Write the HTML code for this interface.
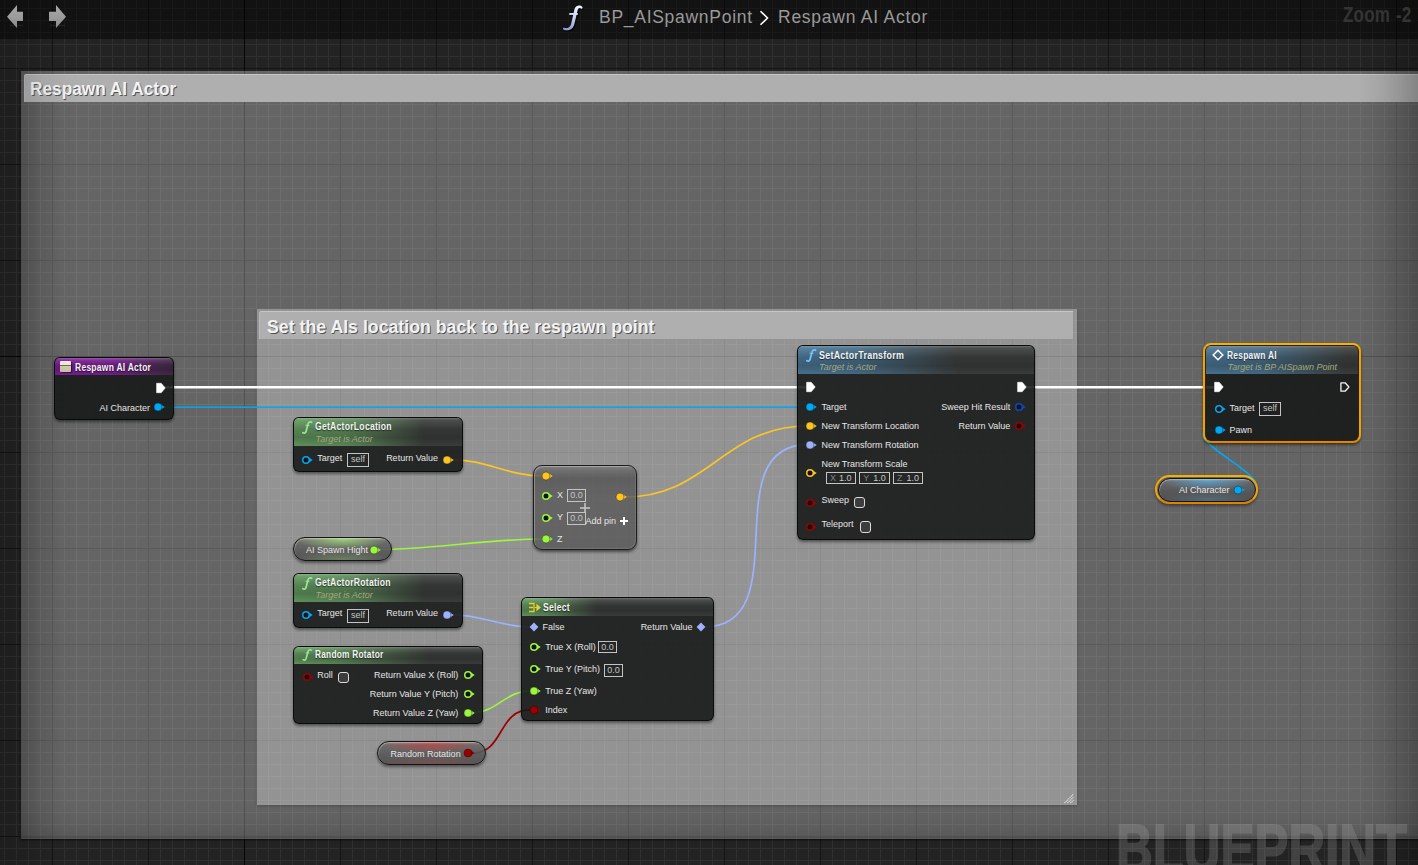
<!DOCTYPE html>
<html><head><meta charset="utf-8">
<style>
*{margin:0;padding:0;box-sizing:border-box}
html,body{width:1418px;height:865px;overflow:hidden;background:#222}
body{position:relative;font-family:"Liberation Sans",sans-serif}
.abs{position:absolute}
#grid{position:absolute;left:0;top:0;width:1418px;height:865px;background-color:#232323;
background-image:
 linear-gradient(to right,#060606 1px,transparent 1px),
 linear-gradient(to bottom,#060606 1px,transparent 1px),
 linear-gradient(to right,#141414 1px,transparent 1px),
 linear-gradient(to bottom,#141414 1px,transparent 1px),
 linear-gradient(to right,#303030 1px,transparent 1px),
 linear-gradient(to bottom,#303030 1px,transparent 1px);
background-size:1418px 865px,1418px 865px,96px 96px,96px 96px,12px 12px,12px 12px;
background-position:244px 0,0 356px,52px 0,0 68px,4px 0,0 8px;
background-repeat:no-repeat,no-repeat,repeat,repeat,repeat,repeat;}
.cmt{position:absolute;background:rgba(255,255,255,0.30)}
.cmt .bar{position:absolute;background:#afafaf;border-top:1px solid #c6c6c6;border-left:1px solid #b9b9b9;border-radius:2px 0 0 0}
.cmt .ttl{position:absolute;font-weight:bold;color:#f2f2f2;text-shadow:1px 1px 0 rgba(0,0,0,0.55);white-space:nowrap;line-height:1}
#wires{position:absolute;left:0;top:0}
.node{position:absolute;background:rgba(22,24,23,0.88);border-radius:6px;border:1px solid rgba(8,8,8,0.9);box-shadow:0 2px 3px rgba(0,0,0,0.45);overflow:hidden}
.hdr{position:absolute;left:0;top:0;right:0}
.pill{position:absolute;border-radius:13px;border:1px solid #141414;box-shadow:0 2px 3px rgba(0,0,0,0.45)}
.t{position:absolute;white-space:nowrap;color:#e6e6e6;line-height:1}
.tt{position:absolute;white-space:nowrap;font-weight:bold;color:#f4f4f4;line-height:1;transform-origin:0 0;text-shadow:0 1px 1px rgba(0,0,0,0.55)}
.sub{position:absolute;white-space:nowrap;font-style:italic;color:#a2a97e;line-height:1}
.box{position:absolute;border:1px solid #c4c4c4;color:#c4c4c4;text-align:center;white-space:nowrap}
#vigl{position:absolute;left:0;top:0;width:80px;height:865px;background:linear-gradient(to right,rgba(0,0,0,0.14),rgba(0,0,0,0.12) 21px,rgba(0,0,0,0.06) 40px,rgba(0,0,0,0.02) 60px,rgba(0,0,0,0) 80px)}
#vigr{position:absolute;left:1338px;top:0;width:80px;height:865px;background:linear-gradient(to left,rgba(0,0,0,0.25),rgba(0,0,0,0.15) 18px,rgba(0,0,0,0.06) 38px,rgba(0,0,0,0.0) 60px)}
#bar{position:absolute;left:0;top:0;width:1418px;height:39px;background:rgba(0,0,0,0.48)}
</style></head><body>
<div id="grid"></div>
<!-- outer comment -->
<div class="cmt" style="left:21px;top:71px;width:1420px;height:768px;box-shadow:0 1px 2px rgba(0,0,0,0.7),inset 0 -1px 0 rgba(255,255,255,0.05),inset 0 -2px 0 rgba(0,0,0,0.08)">
  <div class="abs" style="left:0;top:0;width:100%;height:100%;background:linear-gradient(to top,rgba(0,0,0,0.13),rgba(0,0,0,0.06) 15px,rgba(0,0,0,0) 40px),linear-gradient(to right,rgba(0,0,0,0.12),rgba(0,0,0,0.05) 18px,rgba(0,0,0,0) 40px)"></div>
  <div class="bar" style="left:3px;top:3px;width:1417px;height:28px"></div>
  <div class="ttl" style="left:9.3px;top:9.3px;font-size:18px;transform:scaleX(0.958);transform-origin:0 0">Respawn AI Actor</div>
</div>
<!-- inner comment -->
<div class="cmt" style="left:257px;top:309px;width:820px;height:496px;box-shadow:0 1px 3px rgba(0,0,0,0.22),inset 0 -2px 0 rgba(255,255,255,0.04),inset -2px 0 0 rgba(255,255,255,0.03)">
  <svg class="abs" style="left:806px;top:483px" width="12" height="12"><path d="M1.5 11 L10.5 2 M4.5 11 L10.5 5 M7.5 11 L10.5 8" stroke="rgba(235,235,235,0.8)" stroke-width="1.2" stroke-dasharray="1.2 0.6"/></svg>
  <div class="bar" style="left:2px;top:2px;width:814px;height:28px"></div>
  <div class="ttl" style="left:10.2px;top:8.8px;font-size:18px;transform:scaleX(0.985);transform-origin:0 0">Set the AIs location back to the respawn point</div>
</div>

<svg id="wires" width="1418" height="865"><path d="M160 387.3 L810 387.3" stroke="#fff" stroke-width="2.4" fill="none"/><path d="M1020 387.3 L1218 387.3" stroke="#fff" stroke-width="2.4" fill="none"/><path d="M160 407.2 L810 407.2" stroke="#00a8f3" stroke-width="1.6" fill="none"/><path d="M451.0 459.6 C487.1 459.6 506.9 476.0 543.0 476.0" stroke="#fcc424" stroke-width="1.7" fill="none"/><path d="M624.0 497.0 C709.0 497.0 723.0 426.0 808.0 426.0" stroke="#fcc424" stroke-width="1.7" fill="none"/><path d="M377.0 549.5 C435.8 549.5 484.2 539.0 543.0 539.0" stroke="#9cf63f" stroke-width="1.7" fill="none"/><path d="M451.0 614.6 C481.8 614.6 500.2 627.0 531.0 627.0" stroke="#9db2ff" stroke-width="1.7" fill="none"/><path d="M704.0 627.0 C799.4 627.0 712.6 444.7 808.0 444.7" stroke="#9db2ff" stroke-width="1.7" fill="none"/><path d="M471.0 712.8 C498.3 712.8 503.7 691.0 531.0 691.0" stroke="#9cf63f" stroke-width="1.7" fill="none"/><path d="M471.0 753.4 C505.6 753.4 496.4 709.7 531.0 709.7" stroke="#9a0000" stroke-width="1.7" fill="none"/><path d="M1238 489.5 C1306 489.5 1153 429.7 1221 429.7" stroke="#00a8f3" stroke-width="1.7" fill="none"/></svg>
<div class="node" style="left:54px;top:357px;width:120px;height:63px;">
<div class="hdr" style="height:17px;background:linear-gradient(to bottom, rgba(255,255,255,0.25) 0px, rgba(255,255,255,0.08) 2px, rgba(0,0,0,0.14) 40%, rgba(0,0,0,0.22) 70%, rgba(0,0,0,0.06) 100%),linear-gradient(to right, rgba(132,30,160,0.95) 0px, rgba(132,30,160,0.8) 60px, rgba(132,30,160,0) 125px),#3a2f3c"></div>
</div>
<div class="abs" style="left:60px;top:361px;width:11px;height:11px;background:linear-gradient(#f0eee6 0,#ece9de 38%,#7a6a4a 38%,#7a6a4a 48%,#d2ccb2 48%,#c8c0a4 100%);border-radius:1px;box-shadow:1px 1px 1px rgba(0,0,0,0.5)"></div>
<div class="tt" style="left:75.0px;top:362.51px;font-size:10px;letter-spacing:0.3px;transform:scaleX(0.85)">Respawn AI Actor</div>
<svg class="abs" style="left:155.0px;top:381.6px" width="12" height="12"><path d="M1.6 1.3 L6.2 1.3 L10.2 6 L6.2 10.7 L1.6 10.7Z" fill="#fff" stroke="#fff" stroke-width="0.6" stroke-linejoin="round"/></svg>
<div class="t" style="right:1268.0px;top:403.98px;font-size:9px;">AI Character</div>
<svg class="abs" style="left:152.2px;top:401.4px" width="14" height="12"><path d="M9.00 3.6 L12.70 6 L9.00 8.4Z" fill="#00a8f3"/><circle cx="6" cy="6" r="4.00" fill="#00a8f3" stroke="rgba(10,10,10,0.55)" stroke-width="0.7"/></svg>
<div class="node" style="left:293px;top:417px;width:170px;height:55px;">
<div class="hdr" style="height:28px;background:linear-gradient(to bottom, rgba(255,255,255,0.25) 0px, rgba(255,255,255,0.08) 2px, rgba(0,0,0,0.14) 40%, rgba(0,0,0,0.22) 70%, rgba(0,0,0,0.06) 100%),linear-gradient(to right, rgba(102,158,98,0.95) 0px, rgba(102,158,98,0.8) 55px, rgba(102,158,98,0) 130px),#3c3f3d"></div>
</div>
<svg class="abs" style="left:302px;top:421px;overflow:visible" width="10" height="13" viewBox="0 0 10 13"><path d="M9.6 1.3 C8.4 0.4 6.6 0.7 6.0 2.9 L4.1 10.2 C3.6 12.1 2.0 12.6 0.8 11.6" stroke="#9ee59a" stroke-width="1.7" fill="none" stroke-linecap="round"/><path d="M3.6 4.3 L7.4 4.3" stroke="#9ee59a" stroke-width="1.1" fill="none"/></svg>
<div class="tt" style="left:314.7px;top:422.12px;font-size:10px;letter-spacing:0.3px;transform:scaleX(0.86)">GetActorLocation</div>
<div class="sub" style="left:315.5px;top:434.78px;font-size:9px;">Target is Actor</div>
<svg class="abs" style="left:300.4px;top:453.6px" width="14" height="12"><path d="M9.00 3.6 L12.70 6 L9.00 8.4Z" fill="#00a8f3"/><circle cx="6" cy="6" r="3.25" fill="#121212" stroke="#00a8f3" stroke-width="1.5"/></svg>
<div class="t" style="left:317.2px;top:453.88px;font-size:9px;">Target</div>
<div class="box" style="left:347.0px;top:453.0px;width:22.0px;height:13.5px;font-size:9px;line-height:11.5px;">self</div>
<div class="t" style="right:980.0px;top:453.88px;font-size:9px;">Return Value</div>
<svg class="abs" style="left:441.1px;top:453.6px" width="14" height="12"><path d="M9.00 3.6 L12.70 6 L9.00 8.4Z" fill="#fcc424"/><circle cx="6" cy="6" r="4.00" fill="#fcc424" stroke="rgba(10,10,10,0.55)" stroke-width="0.7"/></svg>
<div class="node cmp" style="left:533px;top:465px;width:104px;height:85px;background:linear-gradient(rgba(125,125,125,0.78) 0,rgba(100,100,100,0.75) 4px,rgba(74,74,74,0.72) 12px,rgba(82,82,82,0.72) 30px,rgba(80,80,80,0.72) 100%);border-radius:9px;border:1px solid #1c1c1c;box-shadow:inset 1px 1px 0 rgba(255,255,255,0.28),inset -1px -1px 0 rgba(255,255,255,0.10),0 2px 3px rgba(0,0,0,0.5)"></div>
<svg class="abs" style="left:540.1px;top:469.9px" width="14" height="12"><path d="M9.00 3.6 L12.70 6 L9.00 8.4Z" fill="#fcc424"/><circle cx="6" cy="6" r="4.00" fill="#fcc424" stroke="rgba(10,10,10,0.55)" stroke-width="0.7"/></svg>
<svg class="abs" style="left:540.1px;top:489.7px" width="14" height="12"><path d="M9.00 3.6 L12.70 6 L9.00 8.4Z" fill="#9cf63f"/><circle cx="6" cy="6" r="3.25" fill="#121212" stroke="#9cf63f" stroke-width="1.5"/></svg>
<div class="t" style="left:557.0px;top:490.98px;font-size:9px;">X</div>
<div class="box" style="left:567.3px;top:489.4px;width:18.5px;height:12.9px;font-size:9px;line-height:10.9px;">0.0</div>
<svg class="abs" style="left:540.1px;top:511.5px" width="14" height="12"><path d="M9.00 3.6 L12.70 6 L9.00 8.4Z" fill="#9cf63f"/><circle cx="6" cy="6" r="3.25" fill="#121212" stroke="#9cf63f" stroke-width="1.5"/></svg>
<div class="t" style="left:557.0px;top:513.28px;font-size:9px;">Y</div>
<div class="box" style="left:567.3px;top:512.0px;width:18.5px;height:12.8px;font-size:9px;line-height:10.8px;">0.0</div>
<svg class="abs" style="left:540.1px;top:532.8px" width="14" height="12"><path d="M9.00 3.6 L12.70 6 L9.00 8.4Z" fill="#9cf63f"/><circle cx="6" cy="6" r="4.00" fill="#9cf63f" stroke="rgba(10,10,10,0.55)" stroke-width="0.7"/></svg>
<div class="t" style="left:557.0px;top:535.28px;font-size:9px;">Z</div>
<svg class="abs" style="left:614.1px;top:490.9px" width="14" height="12"><path d="M9.00 3.6 L12.70 6 L9.00 8.4Z" fill="#fcc424"/><circle cx="6" cy="6" r="4.00" fill="#fcc424" stroke="rgba(10,10,10,0.55)" stroke-width="0.7"/></svg>
<div class="t" style="left:585.5px;top:517.28px;font-size:9px;">Add pin</div>
<div class="abs" style="left:620px;top:520px;width:8px;height:2px;background:#fff"></div><div class="abs" style="left:623px;top:517px;width:2px;height:8px;background:#fff"></div>
<div class="abs" style="left:580px;top:506.8px;width:10px;height:2px;background:rgba(195,195,195,0.8)"></div><div class="abs" style="left:584px;top:503px;width:2px;height:10px;background:rgba(195,195,195,0.8)"></div>
<div class="pill" style="left:293px;top:537px;width:99px;height:24px;background:linear-gradient(to bottom, rgba(255,255,255,0.22) 0px, rgba(255,255,255,0) 3px),radial-gradient(ellipse 48% 45% at 50% 8%, rgba(160,215,120,0.85), rgba(160,215,120,0) 100%),radial-gradient(ellipse 50% 35% at 50% 95%, rgba(160,215,120,0.3), rgba(160,215,120,0) 100%),linear-gradient(rgba(108,108,108,0.88),rgba(86,86,86,0.88) 55%,rgba(76,76,76,0.88));box-shadow:inset 1px 1px 0 rgba(255,255,255,0.25),0 2px 3px rgba(0,0,0,0.45)"></div>
<div class="t" style="left:306.0px;top:545.88px;font-size:9px;">AI Spawn Hight</div>
<svg class="abs" style="left:367.8px;top:543.5px" width="14" height="12"><path d="M9.00 3.6 L12.70 6 L9.00 8.4Z" fill="#9cf63f"/><circle cx="6" cy="6" r="4.00" fill="#9cf63f" stroke="rgba(10,10,10,0.55)" stroke-width="0.7"/></svg>
<div class="node" style="left:293px;top:573px;width:170px;height:55px;">
<div class="hdr" style="height:28px;background:linear-gradient(to bottom, rgba(255,255,255,0.25) 0px, rgba(255,255,255,0.08) 2px, rgba(0,0,0,0.14) 40%, rgba(0,0,0,0.22) 70%, rgba(0,0,0,0.06) 100%),linear-gradient(to right, rgba(102,158,98,0.95) 0px, rgba(102,158,98,0.8) 55px, rgba(102,158,98,0) 130px),#3c3f3d"></div>
</div>
<svg class="abs" style="left:302px;top:577px;overflow:visible" width="10" height="13" viewBox="0 0 10 13"><path d="M9.6 1.3 C8.4 0.4 6.6 0.7 6.0 2.9 L4.1 10.2 C3.6 12.1 2.0 12.6 0.8 11.6" stroke="#9ee59a" stroke-width="1.7" fill="none" stroke-linecap="round"/><path d="M3.6 4.3 L7.4 4.3" stroke="#9ee59a" stroke-width="1.1" fill="none"/></svg>
<div class="tt" style="left:314.7px;top:578.12px;font-size:10px;letter-spacing:0.3px;transform:scaleX(0.86)">GetActorRotation</div>
<div class="sub" style="left:315.5px;top:590.98px;font-size:9px;">Target is Actor</div>
<svg class="abs" style="left:300.4px;top:608.6px" width="14" height="12"><path d="M9.00 3.6 L12.70 6 L9.00 8.4Z" fill="#00a8f3"/><circle cx="6" cy="6" r="3.25" fill="#121212" stroke="#00a8f3" stroke-width="1.5"/></svg>
<div class="t" style="left:317.2px;top:608.98px;font-size:9px;">Target</div>
<div class="box" style="left:347.0px;top:609.0px;width:22.0px;height:13.5px;font-size:9px;line-height:11.5px;">self</div>
<div class="t" style="right:980.0px;top:608.98px;font-size:9px;">Return Value</div>
<svg class="abs" style="left:441.1px;top:608.6px" width="14" height="12"><path d="M9.00 3.6 L12.70 6 L9.00 8.4Z" fill="#9db2ff"/><circle cx="6" cy="6" r="4.00" fill="#9db2ff" stroke="rgba(10,10,10,0.55)" stroke-width="0.7"/></svg>
<div class="node" style="left:293px;top:646px;width:190px;height:78px;">
<div class="hdr" style="height:17px;background:linear-gradient(to bottom, rgba(255,255,255,0.25) 0px, rgba(255,255,255,0.08) 2px, rgba(0,0,0,0.14) 40%, rgba(0,0,0,0.22) 70%, rgba(0,0,0,0.06) 100%),linear-gradient(to right, rgba(102,158,98,0.95) 0px, rgba(102,158,98,0.8) 40px, rgba(102,158,98,0) 135px),#3c3f3d"></div>
</div>
<svg class="abs" style="left:302px;top:648.5px;overflow:visible" width="10" height="12" viewBox="0 0 10 13"><path d="M9.6 1.3 C8.4 0.4 6.6 0.7 6.0 2.9 L4.1 10.2 C3.6 12.1 2.0 12.6 0.8 11.6" stroke="#9ee59a" stroke-width="1.7" fill="none" stroke-linecap="round"/><path d="M3.6 4.3 L7.4 4.3" stroke="#9ee59a" stroke-width="1.1" fill="none"/></svg>
<div class="tt" style="left:314.8px;top:650.41px;font-size:10px;letter-spacing:0.3px;transform:scaleX(0.83)">Random Rotator</div>
<svg class="abs" style="left:300.5px;top:670.8px" width="14" height="12"><path d="M9.00 3.6 L12.70 6 L9.00 8.4Z" fill="#9a0000"/><circle cx="6" cy="6" r="3.25" fill="#121212" stroke="#9a0000" stroke-width="1.5"/></svg>
<div class="t" style="left:317.3px;top:671.48px;font-size:9px;">Roll</div>
<div class="abs" style="left:337.6px;top:671.7px;width:11.8px;height:11.4px;border:1.6px solid #dcdcdc;border-radius:3px;background:#3c3c3c"></div>
<div class="t" style="right:959.7px;top:670.98px;font-size:9px;">Return Value X (Roll)</div>
<svg class="abs" style="left:461.5px;top:668.7px" width="14" height="12"><path d="M9.00 3.6 L12.70 6 L9.00 8.4Z" fill="#9cf63f"/><circle cx="6" cy="6" r="3.25" fill="#121212" stroke="#9cf63f" stroke-width="1.5"/></svg>
<div class="t" style="right:959.7px;top:690.48px;font-size:9px;">Return Value Y (Pitch)</div>
<svg class="abs" style="left:461.5px;top:687.9px" width="14" height="12"><path d="M9.00 3.6 L12.70 6 L9.00 8.4Z" fill="#9cf63f"/><circle cx="6" cy="6" r="3.25" fill="#121212" stroke="#9cf63f" stroke-width="1.5"/></svg>
<div class="t" style="right:959.7px;top:708.98px;font-size:9px;">Return Value Z (Yaw)</div>
<svg class="abs" style="left:461.5px;top:706.8px" width="14" height="12"><path d="M9.00 3.6 L12.70 6 L9.00 8.4Z" fill="#9cf63f"/><circle cx="6" cy="6" r="4.00" fill="#9cf63f" stroke="rgba(10,10,10,0.55)" stroke-width="0.7"/></svg>
<div class="node" style="left:521px;top:597px;width:193px;height:124px;">
<div class="hdr" style="height:18px;background:linear-gradient(to bottom, rgba(255,255,255,0.25) 0px, rgba(255,255,255,0.08) 2px, rgba(0,0,0,0.14) 40%, rgba(0,0,0,0.22) 70%, rgba(0,0,0,0.06) 100%),linear-gradient(to right, rgba(102,158,98,0.95) 0px, rgba(102,158,98,0.8) 25px, rgba(102,158,98,0) 75px),#3c3f3d"></div>
</div>
<svg class="abs" style="left:528px;top:602px" width="14" height="11"><path d="M1 1.5 H6 V9.5 H1 M1 5.5 H5" stroke="#e8d030" stroke-width="1.3" fill="none"/><path d="M7 5.5 H10 M9 3 L12 5.5 L9 8Z" stroke="#e8d030" stroke-width="1.2" fill="#e8d030"/></svg>
<div class="tt" style="left:542.6px;top:602.91px;font-size:10px;letter-spacing:0.3px;transform:scaleX(0.86)">Select</div>
<svg class="abs" style="left:528.3px;top:620.9px" width="12" height="12"><path d="M6 1.6 L10.4 6 L6 10.4 L1.6 6Z" fill="#9db2ff"/></svg>
<div class="t" style="left:542.4px;top:623.48px;font-size:9px;">False</div>
<div class="t" style="right:725.5px;top:623.48px;font-size:9px;">Return Value</div>
<svg class="abs" style="left:695.2px;top:620.9px" width="12" height="12"><path d="M6 1.6 L10.4 6 L6 10.4 L1.6 6Z" fill="#9db2ff"/></svg>
<svg class="abs" style="left:528.0px;top:641.0px" width="14" height="12"><path d="M9.00 3.6 L12.70 6 L9.00 8.4Z" fill="#9cf63f"/><circle cx="6" cy="6" r="3.25" fill="#121212" stroke="#9cf63f" stroke-width="1.5"/></svg>
<div class="t" style="left:545.2px;top:643.48px;font-size:9px;">True X (Roll)</div>
<div class="box" style="left:598.2px;top:641.4px;width:18.6px;height:12.0px;font-size:9px;line-height:10.0px;">0.0</div>
<svg class="abs" style="left:528.0px;top:663.3px" width="14" height="12"><path d="M9.00 3.6 L12.70 6 L9.00 8.4Z" fill="#9cf63f"/><circle cx="6" cy="6" r="3.25" fill="#121212" stroke="#9cf63f" stroke-width="1.5"/></svg>
<div class="t" style="left:545.2px;top:665.48px;font-size:9px;">True Y (Pitch)</div>
<div class="box" style="left:604.2px;top:663.6px;width:18.7px;height:13.0px;font-size:9px;line-height:11.0px;">0.0</div>
<svg class="abs" style="left:528.0px;top:685.1px" width="14" height="12"><path d="M9.00 3.6 L12.70 6 L9.00 8.4Z" fill="#9cf63f"/><circle cx="6" cy="6" r="4.00" fill="#9cf63f" stroke="rgba(10,10,10,0.55)" stroke-width="0.7"/></svg>
<div class="t" style="left:545.2px;top:687.48px;font-size:9px;">True Z (Yaw)</div>
<svg class="abs" style="left:528.0px;top:703.7px" width="14" height="12"><path d="M9.00 3.6 L12.70 6 L9.00 8.4Z" fill="#9a0000"/><circle cx="6" cy="6" r="4.00" fill="#9a0000" stroke="rgba(10,10,10,0.55)" stroke-width="0.7"/></svg>
<div class="t" style="left:545.2px;top:705.98px;font-size:9px;">Index</div>
<div class="pill" style="left:377px;top:741px;width:109px;height:24px;background:linear-gradient(to bottom, rgba(255,255,255,0.22) 0px, rgba(255,255,255,0) 3px),radial-gradient(ellipse 48% 45% at 50% 8%, rgba(185,70,70,0.85), rgba(185,70,70,0) 100%),radial-gradient(ellipse 50% 35% at 50% 95%, rgba(185,70,70,0.3), rgba(185,70,70,0) 100%),linear-gradient(rgba(108,108,108,0.88),rgba(86,86,86,0.88) 55%,rgba(76,76,76,0.88));box-shadow:inset 1px 1px 0 rgba(255,255,255,0.25),0 2px 3px rgba(0,0,0,0.45)"></div>
<div class="t" style="left:390.6px;top:749.98px;font-size:9px;">Random Rotation</div>
<svg class="abs" style="left:461.7px;top:747.4px" width="14" height="12"><path d="M9.00 3.6 L12.70 6 L9.00 8.4Z" fill="#9a0000"/><circle cx="6" cy="6" r="4.00" fill="#9a0000" stroke="rgba(10,10,10,0.55)" stroke-width="0.7"/></svg>
<div class="node" style="left:797px;top:345px;width:238px;height:195px;">
<div class="hdr" style="height:28px;background:linear-gradient(to bottom, rgba(255,255,255,0.25) 0px, rgba(255,255,255,0.08) 2px, rgba(0,0,0,0.14) 40%, rgba(0,0,0,0.22) 70%, rgba(0,0,0,0.06) 100%),linear-gradient(to right, rgba(76,122,156,0.95) 0px, rgba(76,122,156,0.8) 60px, rgba(76,122,156,0) 160px),#3c3f3d"></div>
</div>
<svg class="abs" style="left:806px;top:349px;overflow:visible" width="10" height="13" viewBox="0 0 10 13"><path d="M9.6 1.3 C8.4 0.4 6.6 0.7 6.0 2.9 L4.1 10.2 C3.6 12.1 2.0 12.6 0.8 11.6" stroke="#78c4ff" stroke-width="1.7" fill="none" stroke-linecap="round"/><path d="M3.6 4.3 L7.4 4.3" stroke="#78c4ff" stroke-width="1.1" fill="none"/></svg>
<div class="tt" style="left:818.5px;top:350.72px;font-size:10px;letter-spacing:0.3px;transform:scaleX(0.89)">SetActorTransform</div>
<div class="sub" style="left:819.1px;top:363.18px;font-size:9px;">Target is Actor</div>
<svg class="abs" style="left:805.0px;top:381.1px" width="12" height="12"><path d="M1.6 1.3 L6.2 1.3 L10.2 6 L6.2 10.7 L1.6 10.7Z" fill="#fff" stroke="#fff" stroke-width="0.6" stroke-linejoin="round"/></svg>
<svg class="abs" style="left:1016.0px;top:381.1px" width="12" height="12"><path d="M1.6 1.3 L6.2 1.3 L10.2 6 L6.2 10.7 L1.6 10.7Z" fill="#fff" stroke="#fff" stroke-width="0.6" stroke-linejoin="round"/></svg>
<svg class="abs" style="left:804.0px;top:400.9px" width="14" height="12"><path d="M9.00 3.6 L12.70 6 L9.00 8.4Z" fill="#00a8f3"/><circle cx="6" cy="6" r="4.00" fill="#00a8f3" stroke="rgba(10,10,10,0.55)" stroke-width="0.7"/></svg>
<div class="t" style="left:821.5px;top:403.48px;font-size:9px;">Target</div>
<svg class="abs" style="left:804.0px;top:420.0px" width="14" height="12"><path d="M9.00 3.6 L12.70 6 L9.00 8.4Z" fill="#fcc424"/><circle cx="6" cy="6" r="4.00" fill="#fcc424" stroke="rgba(10,10,10,0.55)" stroke-width="0.7"/></svg>
<div class="t" style="left:821.5px;top:422.48px;font-size:9px;">New Transform Location</div>
<svg class="abs" style="left:804.0px;top:438.7px" width="14" height="12"><path d="M9.00 3.6 L12.70 6 L9.00 8.4Z" fill="#9db2ff"/><circle cx="6" cy="6" r="4.00" fill="#9db2ff" stroke="rgba(10,10,10,0.55)" stroke-width="0.7"/></svg>
<div class="t" style="left:821.5px;top:441.28px;font-size:9px;">New Transform Rotation</div>
<svg class="abs" style="left:804.0px;top:466.9px" width="14" height="12"><path d="M9.00 3.6 L12.70 6 L9.00 8.4Z" fill="#fcc424"/><circle cx="6" cy="6" r="3.25" fill="#121212" stroke="#fcc424" stroke-width="1.5"/></svg>
<div class="t" style="left:821.5px;top:459.98px;font-size:9px;">New Transform Scale</div>
<div class="box" style="left:826.0px;top:471.5px;width:29.6px;height:12.9px;font-size:9px;line-height:10.9px;"><span style="color:#808080;position:absolute;left:3px">X</span><span style="position:absolute;right:3px">1.0</span></div>
<div class="box" style="left:859.2px;top:471.5px;width:30.6px;height:12.9px;font-size:9px;line-height:10.9px;"><span style="color:#808080;position:absolute;left:3px">Y</span><span style="position:absolute;right:3px">1.0</span></div>
<div class="box" style="left:893.0px;top:471.5px;width:30.1px;height:12.9px;font-size:9px;line-height:10.9px;"><span style="color:#808080;position:absolute;left:3px">Z</span><span style="position:absolute;right:3px">1.0</span></div>
<svg class="abs" style="left:804.0px;top:497.0px" width="14" height="12"><path d="M9.00 3.6 L12.70 6 L9.00 8.4Z" fill="#9a0000"/><circle cx="6" cy="6" r="3.25" fill="#121212" stroke="#9a0000" stroke-width="1.5"/></svg>
<div class="t" style="left:821.5px;top:496.28px;font-size:9px;">Sweep</div>
<div class="abs" style="left:853.8px;top:497.2px;width:11.7px;height:11.1px;border:1.6px solid #dcdcdc;border-radius:3px;background:#3c3c3c"></div>
<svg class="abs" style="left:804.0px;top:521.2px" width="14" height="12"><path d="M9.00 3.6 L12.70 6 L9.00 8.4Z" fill="#9a0000"/><circle cx="6" cy="6" r="3.25" fill="#121212" stroke="#9a0000" stroke-width="1.5"/></svg>
<div class="t" style="left:821.5px;top:520.48px;font-size:9px;">Teleport</div>
<div class="abs" style="left:859.8px;top:521.3px;width:11.5px;height:11.3px;border:1.6px solid #dcdcdc;border-radius:3px;background:#3c3c3c"></div>
<div class="t" style="right:407.7px;top:403.48px;font-size:9px;">Sweep Hit Result</div>
<svg class="abs" style="left:1013.3px;top:400.9px" width="14" height="12"><path d="M9.00 3.6 L12.70 6 L9.00 8.4Z" fill="#0a4cc0"/><circle cx="6" cy="6" r="3.25" fill="#121212" stroke="#0a4cc0" stroke-width="1.5"/></svg>
<div class="t" style="right:407.7px;top:422.48px;font-size:9px;">Return Value</div>
<svg class="abs" style="left:1013.3px;top:420.0px" width="14" height="12"><path d="M9.00 3.6 L12.70 6 L9.00 8.4Z" fill="#9a0000"/><circle cx="6" cy="6" r="3.25" fill="#121212" stroke="#9a0000" stroke-width="1.5"/></svg>
<div class="node" style="left:1205px;top:345px;width:154px;height:96px;border-color:#2a2000">
<div class="hdr" style="height:28px;background:linear-gradient(to bottom, rgba(255,255,255,0.25) 0px, rgba(255,255,255,0.08) 2px, rgba(0,0,0,0.14) 40%, rgba(0,0,0,0.22) 70%, rgba(0,0,0,0.06) 100%),linear-gradient(to right, rgba(76,122,156,0.95) 0px, rgba(76,122,156,0.8) 55px, rgba(76,122,156,0) 140px),#3c3f3d"></div>
</div>
<div class="abs" style="left:1203px;top:343px;width:158px;height:100px;border-radius:8px;border:2.5px solid #f2a200;border-top-color:#f7b000;border-bottom-color:#e48400;box-shadow:0 2px 3px rgba(0,0,0,0.4)"></div>
<svg class="abs" style="left:1211px;top:348px" width="14" height="14"><path d="M7 2.2 L11.8 7 L7 11.8 L2.2 7Z" fill="none" stroke="#fff" stroke-width="1.5"/></svg>
<div class="tt" style="left:1226.9px;top:350.51px;font-size:10px;letter-spacing:0.3px;transform:scaleX(0.84)">Respawn AI</div>
<div class="sub" style="left:1227.5px;top:363.38px;font-size:9px;">Target is BP AISpawn Point</div>
<svg class="abs" style="left:1213.0px;top:381.1px" width="12" height="12"><path d="M1.6 1.3 L6.2 1.3 L10.2 6 L6.2 10.7 L1.6 10.7Z" fill="#fff" stroke="#fff" stroke-width="0.6" stroke-linejoin="round"/></svg>
<svg class="abs" style="left:1339.0px;top:381.1px" width="12" height="12"><path d="M1.9 1.8 L6.1 1.8 L9.9 6 L6.1 10.2 L1.9 10.2Z" fill="none" stroke="#f4f4f4" stroke-width="1.3" stroke-linejoin="round"/></svg>
<svg class="abs" style="left:1212.7px;top:402.9px" width="14" height="12"><path d="M9.00 3.6 L12.70 6 L9.00 8.4Z" fill="#00a8f3"/><circle cx="6" cy="6" r="3.25" fill="#121212" stroke="#00a8f3" stroke-width="1.5"/></svg>
<div class="t" style="left:1229.5px;top:404.48px;font-size:9px;">Target</div>
<div class="box" style="left:1259.1px;top:402.0px;width:21.8px;height:13.5px;font-size:9px;line-height:11.5px;">self</div>
<svg class="abs" style="left:1212.7px;top:423.7px" width="14" height="12"><path d="M9.00 3.6 L12.70 6 L9.00 8.4Z" fill="#00a8f3"/><circle cx="6" cy="6" r="4.00" fill="#00a8f3" stroke="rgba(10,10,10,0.55)" stroke-width="0.7"/></svg>
<div class="t" style="left:1229.5px;top:425.98px;font-size:9px;">Pawn</div>
<div class="pill" style="left:1157.5px;top:477.5px;width:98px;height:24px;background:linear-gradient(to bottom, rgba(255,255,255,0.22) 0px, rgba(255,255,255,0) 3px),radial-gradient(ellipse 48% 45% at 50% 8%, rgba(90,165,210,0.85), rgba(90,165,210,0) 100%),radial-gradient(ellipse 50% 35% at 50% 95%, rgba(90,165,210,0.3), rgba(90,165,210,0) 100%),linear-gradient(rgba(108,108,108,0.88),rgba(86,86,86,0.88) 55%,rgba(76,76,76,0.88));box-shadow:inset 1px 1px 0 rgba(255,255,255,0.25)"></div>
<div class="abs" style="left:1155px;top:475px;width:103px;height:29px;border-radius:15px;border:2.5px solid #f2a400;border-top-color:#f7b000;border-bottom-color:#e08200;box-shadow:0 2px 3px rgba(0,0,0,0.4)"></div>
<div class="t" style="right:188.4px;top:485.88px;font-size:9px;">AI Character</div>
<svg class="abs" style="left:1232.0px;top:483.5px" width="14" height="12"><path d="M9.00 3.6 L12.70 6 L9.00 8.4Z" fill="#00a8f3"/><circle cx="6" cy="6" r="4.00" fill="#00a8f3" stroke="rgba(10,10,10,0.55)" stroke-width="0.7"/></svg>
<div id="vigl"></div><div id="vigr"></div>
<div id="bar"></div>
<svg class="abs" style="left:0;top:0" width="80" height="36">
 <defs><linearGradient id="ag" x1="0" y1="0" x2="0" y2="1"><stop offset="0" stop-color="#a8a8a8"/><stop offset="0.5" stop-color="#9c9c9c"/><stop offset="1" stop-color="#8a8a8a"/></linearGradient></defs>
 <path d="M10 25.5 L23 25.5" stroke="rgba(255,255,255,0.07)" stroke-width="1.5"/>
 <path d="M50 25.5 L65 25.5" stroke="rgba(255,255,255,0.07)" stroke-width="1.5"/>
 <path d="M7 16.7 L17 5 L17 11.8 L23 11.8 L23 21 L17 21 L17 28Z" fill="url(#ag)"/>
 <path d="M66 16.7 L56 5 L56 11.8 L49 11.8 L49 21 L56 21 L56 28Z" fill="url(#ag)"/>
</svg>
<svg class="abs" style="left:558px;top:2px" width="32" height="32" viewBox="0 0 32 32">
 <defs><linearGradient id="fg" gradientUnits="userSpaceOnUse" x1="0" y1="3" x2="0" y2="29"><stop offset="0" stop-color="#f6f8ff"/><stop offset="0.5" stop-color="#c8d0f2"/><stop offset="1" stop-color="#8a9ad6"/></linearGradient></defs>
 <g transform="translate(1.3,1.3)" fill="#000" opacity="0.55">
 <path d="M24.2 4.8 C22.5 3.0 18.2 2.8 16.6 6.8 L13.0 22.5 C12.0 25.8 9.0 26.8 6.0 25.8 C4.6 25.6 4.6 27.6 6.5 28.0 C10.5 29.0 14.8 27.5 16.2 22.8 L19.4 9.0 C20.0 6.2 21.5 5.4 23.0 6.6 C24.2 7.4 25.2 5.9 24.2 4.8Z"/>
 <path d="M11.3 11.0 H19.8 V12.9 H11.3Z"/></g>
 <path d="M24.2 4.8 C22.5 3.0 18.2 2.8 16.6 6.8 L13.0 22.5 C12.0 25.8 9.0 26.8 6.0 25.8 C4.6 25.6 4.6 27.6 6.5 28.0 C10.5 29.0 14.8 27.5 16.2 22.8 L19.4 9.0 C20.0 6.2 21.5 5.4 23.0 6.6 C24.2 7.4 25.2 5.9 24.2 4.8Z" fill="url(#fg)"/>
 <path d="M11.3 11.0 H19.8 V12.9 H11.3Z" fill="url(#fg)"/>
</svg>
<div class="abs" style="left:599px;top:8.5px;font-size:17.5px;line-height:1;color:#9a9a9a;white-space:nowrap;letter-spacing:0.72px">BP_AISpawnPoint</div>
<svg class="abs" style="left:756px;top:8px" width="16" height="20"><path d="M4.5 3.2 L11.5 10 L4.5 16.8" stroke="#fff" stroke-width="1.6" fill="none"/></svg>
<div class="abs" style="left:778px;top:8.5px;font-size:17.5px;line-height:1;color:#9a9a9a;white-space:nowrap;letter-spacing:0.75px">Respawn AI Actor</div>
<div class="abs" style="left:1343.2px;top:4.0px;font-size:21.8px;font-weight:bold;line-height:1;color:#343434;white-space:nowrap;word-spacing:1px;letter-spacing:0.3px;transform:scaleX(0.78);transform-origin:0 0">Zoom -2</div>
<div class="abs" style="left:1115.8px;top:814.3px;font-size:68px;font-weight:bold;line-height:1;color:#bebebe;-webkit-text-stroke:1.8px #bebebe;opacity:0.2;white-space:nowrap;transform:scaleX(0.748);transform-origin:0 0">BLUEPRINT</div>
</body></html>
